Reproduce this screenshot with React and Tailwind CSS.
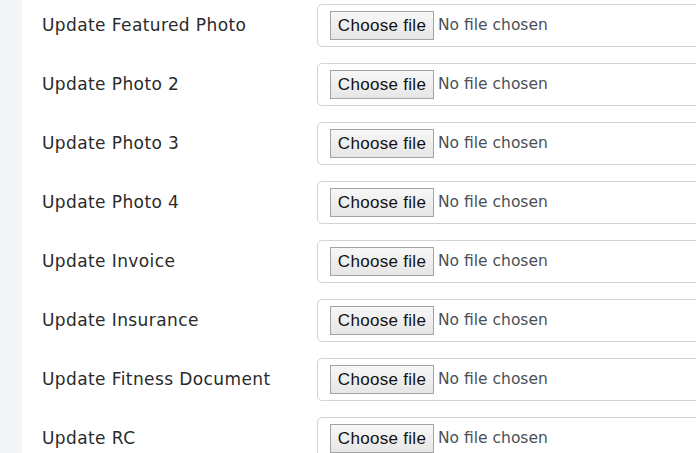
import React from "react";

const fields = [
  "Update Featured Photo",
  "Update Photo 2",
  "Update Photo 3",
  "Update Photo 4",
  "Update Invoice",
  "Update Insurance",
  "Update Fitness Document",
  "Update RC",
];

function FileBox() {
  return (
    <div className="flex items-center h-[43px] w-[460px] shrink-0 border border-[#ced4da] rounded-[5px] bg-white pl-3">
      <button
        type="button"
        className="h-[29px] w-[104px] border border-[#a3a3a3] bg-gradient-to-b from-[#f7f7f7] to-[#e6e6e6] text-[17px] tracking-[0.3px] text-[#111] font-['Liberation_Sans',Arial,sans-serif] leading-none"
      >
        Choose file
      </button>
      <span className="ml-1 text-[15.5px] text-[#4b5057] font-['DejaVu_Sans',sans-serif]">
        No file chosen
      </span>
    </div>
  );
}

function App() {
  return (
    <div className="w-[696px] h-[453px] overflow-hidden flex bg-white">
      <div className="w-[22px] shrink-0 bg-[#f4f5f7]" />
      <div className="flex-1 flex flex-col pt-1 pl-5 gap-4">
        {fields.map((label) => (
          <div key={label} className="flex items-center">
            <div className="w-[275px] shrink-0 text-[17px] tracking-[0.4px] text-[#2a2a2a] font-['DejaVu_Sans',sans-serif]">
              {label}
            </div>
            <FileBox />
          </div>
        ))}
      </div>
    </div>
  );
}

export default App;
